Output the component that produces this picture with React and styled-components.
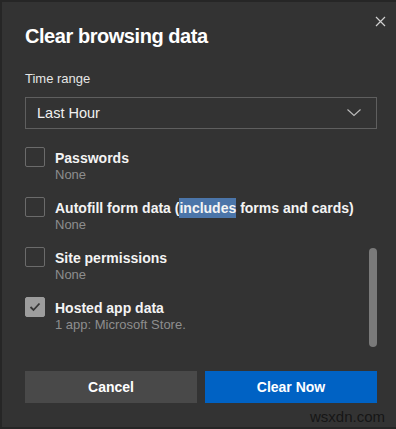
import React from 'react'
import styled, { createGlobalStyle } from 'styled-components'

const GlobalStyle = createGlobalStyle`
  html, body {
    margin: 0;
    padding: 0;
    background: #262626;
    font-family: "Liberation Sans", Arial, sans-serif;
  }
`

const rows = [
  { title: 'Passwords', sub: 'None' },
  { title: 'Autofill form data', extra: true, sub: 'None' },
  { title: 'Site permissions', sub: 'None' },
  { title: 'Hosted app data', sub: '1 app: Microsoft Store.', checked: true },
]

function CheckIcon() {
  return (
    <svg width="12" height="10" viewBox="0 0 12 10">
      <polyline points="1.5,5 4.5,8 10.5,1.5" fill="none" stroke="#363636" strokeWidth="1.8" />
    </svg>
  )
}

function Row({ title, sub, extra, checked }) {
  return (
    <RowWrap>
      <Box checked={checked}>{checked && <CheckIcon />}</Box>
      <RowText>
        <RowTitle>
          {title}
          {extra && (
            <>
              {' ('}<Selected>includes</Selected>{' forms and cards)'}
            </>
          )}
        </RowTitle>
        <RowSub>{sub}</RowSub>
      </RowText>
    </RowWrap>
  )
}

export default function App() {
  return (
    <Page>
      <GlobalStyle />
      <Dialog>
        <Close aria-label="close">
          <svg width="11" height="11" viewBox="0 0 11 11">
            <path d="M1 1 L10 10 M10 1 L1 10" stroke="#d0d0d0" strokeWidth="1.2" />
          </svg>
        </Close>
        <Title>Clear browsing data</Title>
        <Label>Time range</Label>
        <Select>
          <span>Last Hour</span>
          <svg width="14" height="8" viewBox="0 0 14 8">
            <polyline points="0.5,0.5 7,6.5 13.5,0.5" fill="none" stroke="#bdbdbd" strokeWidth="1.1" />
          </svg>
        </Select>
        <List>
          {rows.map(r => <Row key={r.title} {...r} />)}
          <Thumb />
        </List>
        <Buttons>
          <Button>Cancel</Button>
          <Button primary>Clear Now</Button>
        </Buttons>
        <Watermark>wsxdn.com</Watermark>
      </Dialog>
    </Page>
  )
}

const Page = styled.div`
  padding: 2px 0 2px 2px;
  height: 425px;
`

const Dialog = styled.div`
  position: relative;
  box-sizing: border-box;
  height: 425px;
  background: #333333;
  padding: 22px 19px 0 23px;
  display: flex;
  flex-direction: column;
  color: #f2f2f2;
`

const Close = styled.div`
  position: absolute;
  top: 14px;
  right: 10px;
  width: 11px;
  height: 11px;
  display: flex;
`

const Title = styled.h1`
  margin: 0;
  font-size: 20px;
  line-height: 24px;
  font-weight: 700;
  letter-spacing: -0.45px;
  color: #ffffff;
`

const Label = styled.div`
  margin-top: 23px;
  font-size: 13px;
  line-height: 16px;
  color: #e6e6e6;
`

const Select = styled.div`
  margin-top: 10px;
  box-sizing: border-box;
  height: 32px;
  border: 1px solid #5f5f5f;
  display: flex;
  align-items: center;
  justify-content: space-between;
  padding: 0 15px 0 11px;
  font-size: 14.5px;
  color: #f0f0f0;
`

const List = styled.div`
  position: relative;
  margin-top: 18px;
  display: flex;
  flex-direction: column;
`

const RowWrap = styled.div`
  height: 50px;
  display: flex;
  gap: 10px;
`

const Box = styled.div`
  box-sizing: border-box;
  width: 20px;
  height: 20px;
  flex: none;
  border-radius: 2px;
  border: 1px solid ${p => (p.checked ? '#9d9d9d' : '#6b6b6b')};
  background: ${p => (p.checked ? '#9d9d9d' : 'transparent')};
  display: flex;
  align-items: center;
  justify-content: center;
`

const RowText = styled.div`
  padding-top: 2px;
  display: flex;
  flex-direction: column;
`

const RowTitle = styled.div`
  font-size: 14px;
  line-height: 18px;
  font-weight: 700;
  color: #f4f4f4;
`

const Selected = styled.span`
  background: #4b75a9;
  padding: 2px 0;
`

const RowSub = styled.div`
  font-size: 13px;
  line-height: 16px;
  color: #8e8e8e;
`

const Thumb = styled.div`
  position: absolute;
  right: 0;
  top: 101px;
  width: 8px;
  height: 99px;
  border-radius: 4px;
  background: #7a7a7a;
`

const Buttons = styled.div`
  margin-top: 24px;
  display: grid;
  grid-template-columns: 1fr 1fr;
  gap: 8px;
`

const Button = styled.div`
  height: 32px;
  display: flex;
  align-items: center;
  justify-content: center;
  font-size: 14px;
  font-weight: 700;
  color: #ffffff;
  background: ${p => (p.primary ? '#0062c4' : '#494949')};
`

const Watermark = styled.div`
  position: absolute;
  right: 11px;
  bottom: 2px;
  font-size: 15px;
  color: #161616;
`
